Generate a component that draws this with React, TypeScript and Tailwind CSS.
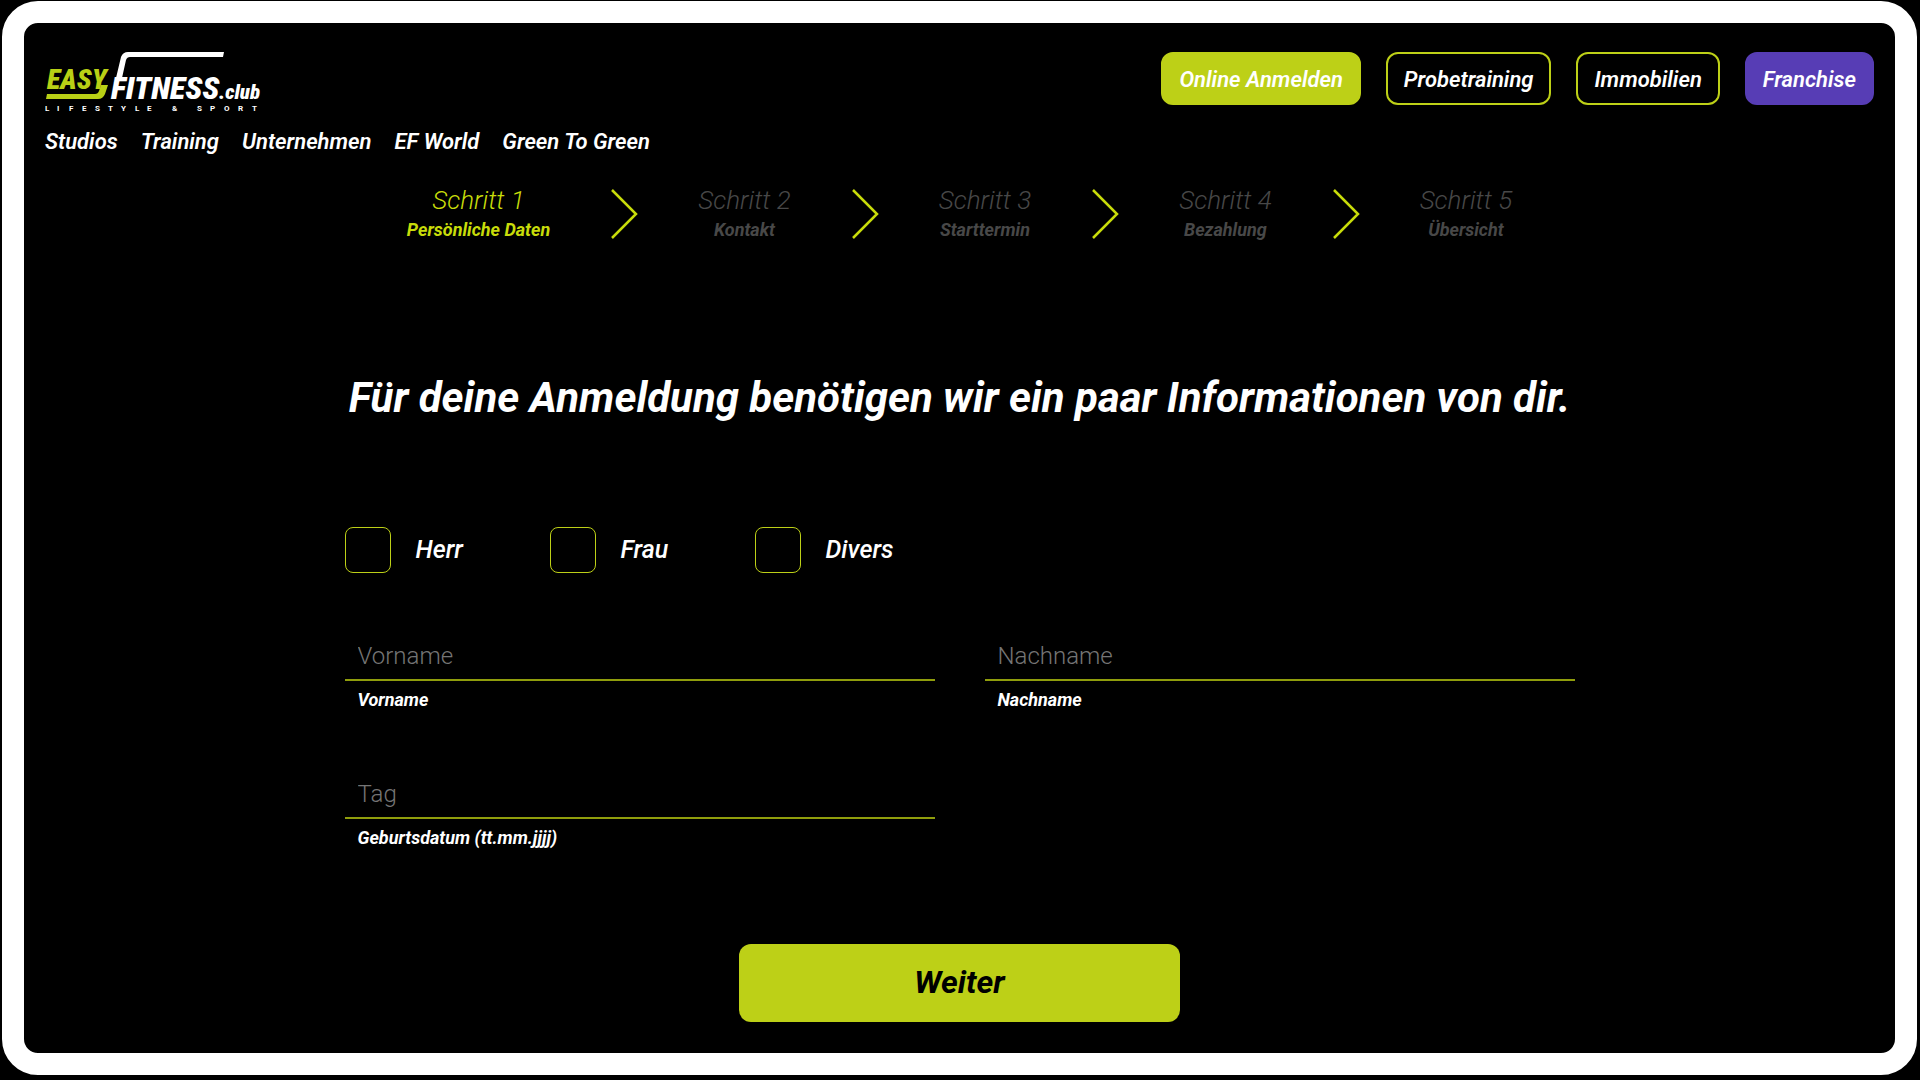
import { Fragment } from "react";

const navLinks = ["Studios", "Training", "Unternehmen", "EF World", "Green To Green"];

const actions = [
  { label: "Online Anmelden", style: "border-[#bdd017] bg-[#bdd017]" },
  { label: "Probetraining", style: "border-[#bdd017] bg-black" },
  { label: "Immobilien", style: "border-[#bdd017] bg-black" },
  { label: "Franchise", style: "border-[#573db5] bg-[#573db5]" },
];

const steps = [
  { title: "Schritt 1", text: "Persönliche Daten" },
  { title: "Schritt 2", text: "Kontakt" },
  { title: "Schritt 3", text: "Starttermin" },
  { title: "Schritt 4", text: "Bezahlung" },
  { title: "Schritt 5", text: "Übersicht" },
];

const salutations = ["Herr", "Frau", "Divers"];

const fields = [
  { id: "vorname", placeholder: "Vorname", label: "Vorname" },
  { id: "nachname", placeholder: "Nachname", label: "Nachname" },
  { id: "geburtsdatum", placeholder: "Tag", label: "Geburtsdatum (tt.mm.jjjj)" },
];

function Logo() {
  return (
    <svg width="216" height="60" viewBox="0 0 216 60" className="block" role="img" aria-label="EASYFITNESS.club Lifestyle & Sport">
      <g className="font-['Roboto_Condensed',Roboto,sans-serif] font-black italic">
        <text x="2" y="37" fill="#b9d015" fontSize="28">EASY</text>
        <text x="66" y="47" fill="#fff" fontSize="32">FITNESS</text>
        <text x="174" y="47" fill="#fff" fontSize="21">.club</text>
      </g>
      <path d="M2 42H50Q53 42 54 39L56 33H63L60 42Q58 47 53 47H1Z" fill="#b9d015" />
      <path d="M71 26L76 5Q78 0 83 0H179L178 5H85Q82 5 81 8L77 26Z" fill="#fff" />
      <text
        y="59"
        x="0 12 24 37 50 63 76 90 102 115 127 140 152 165 179 193 207"
        fill="#fff"
        fontSize="8"
        className="font-['Roboto',sans-serif] font-bold not-italic"
      >
        LIFESTYLE & SPORT
      </text>
    </svg>
  );
}

function Chevron() {
  return (
    <svg width="28" height="52" viewBox="0 0 28 52" fill="none" className="shrink-0" aria-hidden="true">
      <path d="M2 2L26 26L2 50" stroke="#c8dc0a" strokeWidth="2.5" />
    </svg>
  );
}

export default function App() {
  return (
    <div className="flex min-h-screen flex-col bg-black pt-px pr-[3px] pb-[5px] pl-[2px] font-['Roboto',sans-serif] text-white italic">
      <div className="flex-1 rounded-[36px] border-[22px] border-white bg-black pt-[29px]">
        <header className="px-[21px]">
          <div className="flex items-start justify-between">
            <a href="#start">
              <Logo />
            </a>
            <div className="flex gap-[25px]">
              {actions.map((a) => (
                <button key={a.label} type="button" className={`h-[53px] rounded-xl border-2 px-4 pt-0.5 text-[22px] font-semibold ${a.style}`}>
                  {a.label}
                </button>
              ))}
            </div>
          </div>
          <nav className="mt-4 flex gap-[23px] text-[22px] leading-7 font-semibold">
            {navLinks.map((l) => (
              <a key={l} href="#menu">
                {l}
              </a>
            ))}
          </nav>
        </header>

        <main>
          <ol className="mt-7 flex items-center justify-center gap-[60px]">
            {steps.map((s, i) => (
              <Fragment key={s.title}>
                {i > 0 && (
                  <li aria-hidden="true">
                    <Chevron />
                  </li>
                )}
                <li className={`text-center ${i === 0 ? "text-[#c8dc0a]" : "text-[#484848]"}`}>
                  <div className="text-[26px] leading-8 font-light">{s.title}</div>
                  <div className="text-[18px] leading-7 font-bold">{s.text}</div>
                </li>
              </Fragment>
            ))}
          </ol>

          <form className="mx-auto max-w-[1230px]" onSubmit={(e) => e.preventDefault()}>
            <h1 className="mt-[129px] text-center text-[42px] leading-[50px] font-bold">
              Für deine Anmeldung benötigen wir ein paar Informationen von dir.
            </h1>

            <div className="mt-[104px] grid grid-cols-6" role="radiogroup" aria-label="Anrede">
              {salutations.map((s) => (
                <label key={s} className="flex items-center gap-[25px] text-[25px] font-medium">
                  <input
                    type="radio"
                    name="anrede"
                    value={s}
                    className="size-[46px] appearance-none rounded-lg border border-[#bdd017] checked:bg-[#bdd017]"
                  />
                  {s}
                </label>
              ))}
            </div>

            <div className="mt-[60px] grid grid-cols-2 gap-x-[50px] gap-y-[59px]">
              {fields.map((f) => (
                <div key={f.id}>
                  <input
                    id={f.id}
                    type="text"
                    placeholder={f.placeholder}
                    className="block h-12 w-full border-b-2 border-[#8f9d0c] bg-transparent px-[13px] text-[24px] font-light text-white not-italic outline-none placeholder:text-[#757575]"
                  />
                  <label htmlFor={f.id} className="mt-[7px] block px-[13px] text-[18px] leading-6 font-bold">
                    {f.label}
                  </label>
                </div>
              ))}
            </div>

            <button
              type="submit"
              className="mx-auto mt-[94px] block h-[78px] w-[441px] rounded-xl bg-[#bdd017] pb-0.5 text-[32px] font-bold text-black"
            >
              Weiter
            </button>
          </form>
        </main>
      </div>
    </div>
  );
}
